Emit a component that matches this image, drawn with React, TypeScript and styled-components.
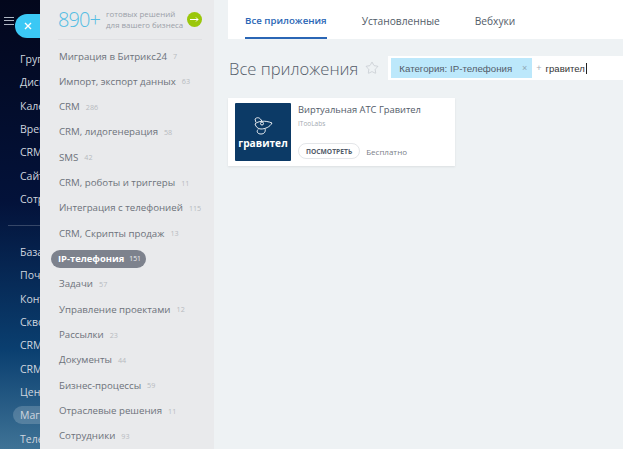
import { createGlobalStyle, styled } from 'styled-components';
import { Star } from 'lucide-react';

const GlobalStyle = createGlobalStyle`
  html, body {
    margin: 0;
    height: 100%;
    overflow: hidden;
  }
  #root {
    height: 100%;
  }
  * {
    box-sizing: border-box;
  }
`;

const Page = styled.div`
  width: 623px;
  height: 449px;
  display: flex;
  overflow: hidden;
  font-family: 'Open Sans', sans-serif;
  background: #eef2f4;
`;

const LeftMenu = styled.nav`
  position: relative;
  width: 40px;
  flex: none;
  padding-top: 50px;
  overflow: hidden;
  background: linear-gradient(180deg, #03071c 0%, #03123a 45%, #0a3f70 78%, #3f7396 100%);
`;

const Burger = styled.div`
  position: absolute;
  left: 4px;
  top: 17px;
  width: 10px;
  height: 8px;
  border-top: 1px solid #aeb6c2;
  border-bottom: 1px solid #aeb6c2;
  &::after {
    content: '';
    display: block;
    height: 1px;
    margin-top: 2px;
    background: #aeb6c2;
  }
`;

const CloseTab = styled.div`
  position: absolute;
  left: 15px;
  top: 14px;
  width: 40px;
  height: 24px;
  padding-left: 9px;
  display: flex;
  align-items: center;
  border-radius: 12px 0 0 12px;
  background: #3bc8f5;
  color: #fff;
`;

const MenuGroup = styled.div`
  display: flex;
  flex-direction: column;
  gap: 5.35px;
`;

const MenuItem = styled.div<{ $active?: boolean }>`
  height: 18px;
  margin-left: 13px;
  padding-left: 7px;
  width: 60px;
  white-space: nowrap;
  line-height: 18px;
  font-size: 10.5px;
  color: #cfd6df;
  border-radius: 9px;
  background: ${(p) => (p.$active ? 'rgba(255, 255, 255, 0.18)' : 'transparent')};
`;

const MenuDivider = styled.div`
  height: 1px;
  margin: 17px 0 17px 8px;
  background: rgba(255, 255, 255, 0.2);
`;

const Categories = styled.aside`
  position: relative;
  width: 174px;
  flex: none;
  padding: 0 12px 0 19px;
  overflow: hidden;
  background: #e9eaec;
`;

const Promo = styled.div`
  display: flex;
  align-items: center;
  height: 39px;
  margin-left: -1px;
`;

const PromoNumber = styled.div`
  font-size: 20px;
  font-weight: 300;
  color: #55bde3;
  letter-spacing: -0.9px;
  white-space: nowrap;
`;

const PromoText = styled.div`
  margin-left: 6px;
  font-size: 7.9px;
  line-height: 11px;
  color: #9aa0a8;
  white-space: nowrap;
`;

const PromoArrow = styled.div`
  flex: none;
  width: 15px;
  height: 15px;
  margin-left: auto;
  display: flex;
  align-items: center;
  justify-content: center;
  border-radius: 50%;
  background: #9bc70b;
`;

const CategoryDivider = styled.div`
  height: 1px;
  margin-left: -1px;
  margin-bottom: 7px;
  background: #dfe0e3;
`;

const CategoryList = styled.ul`
  margin: 0;
  padding: 0;
  list-style: none;
  display: flex;
  flex-direction: column;
  gap: 7.33px;
`;

const CategoryItem = styled.li<{ $active?: boolean }>`
  height: 18px;
  display: flex;
  align-items: center;
  gap: ${(p) => (p.$active ? '5px' : '6px')};
  width: fit-content;
  white-space: nowrap;
  font-size: ${(p) => (p.$active ? '9.4px' : '9.7px')};
  font-weight: ${(p) => (p.$active ? 700 : 400)};
  color: ${(p) => (p.$active ? '#fff' : '#6d727b')};
  ${(p) =>
    p.$active &&
    `
    margin-left: -8px;
    padding: 0 5px 0 7px;
    border-radius: 9px;
    background: #7d828d;
  `}
`;

const CategoryCount = styled.span<{ $active?: boolean }>`
  font-size: ${(p) => (p.$active ? '6.8px' : '7.2px')};
  font-weight: 400;
  color: ${(p) => (p.$active ? '#eceef0' : '#b7babf')};
`;

const Content = styled.main`
  flex: 1;
  min-width: 0;
`;

const Tabs = styled.div`
  height: 39px;
  margin-left: 14px;
  padding-left: 17px;
  display: flex;
  gap: 35px;
  background: #fff;
`;

const Tab = styled.div<{ $active?: boolean }>`
  height: 39px;
  padding-top: 14px;
  font-size: ${(p) => (p.$active ? '9.7px' : '10.2px')};
  line-height: 14px;
  font-weight: ${(p) => (p.$active ? 600 : 400)};
  color: ${(p) => (p.$active ? '#2a66b5' : '#535c69')};
  border-bottom: 2px solid ${(p) => (p.$active ? '#2a66b5' : 'transparent')};
`;

const TitleRow = styled.div`
  height: 24px;
  margin-top: 17px;
  margin-left: 15px;
  display: flex;
  align-items: center;
`;

const Title = styled.h1`
  margin: 0;
  font-size: 16.6px;
  font-weight: 300;
  color: #535c69;
  white-space: nowrap;
`;

const FavStar = styled(Star)`
  flex: none;
  margin-left: 7px;
  color: #b8bdc4;
`;

const FilterBox = styled.div`
  flex: 1;
  height: 24px;
  margin-left: 9px;
  padding-left: 3px;
  display: flex;
  align-items: center;
  background: #fff;
`;

const FilterTag = styled.div`
  height: 20px;
  width: 141px;
  padding: 0 5px 0 8px;
  display: flex;
  align-items: center;
  justify-content: space-between;
  font-family: 'Liberation Sans', sans-serif;
  font-size: 9.7px;
  color: #535c69;
  background: #bce8fb;
`;

const TagClose = styled.span`
  font-size: 9px;
  color: #8fa7b3;
`;

const FilterPlus = styled.span`
  margin-left: 4px;
  font-family: 'Liberation Sans', sans-serif;
  font-size: 9px;
  color: #a8adb4;
`;

const FilterInput = styled.span`
  margin-left: 4px;
  padding-right: 1px;
  font-family: 'Liberation Sans', sans-serif;
  font-size: 9.5px;
  color: #333;
  border-right: 1px solid #222;
`;

const AppCard = styled.article`
  width: 227px;
  height: 68px;
  margin: 18px 0 0 14px;
  padding: 5px 7px;
  display: flex;
  gap: 7px;
  background: #fff;
  box-shadow: 0 1px 2px rgba(0, 0, 0, 0.08);
`;

const AppLogo = styled.div`
  width: 56px;
  height: 58px;
  flex: none;
  padding-top: 13px;
  display: flex;
  flex-direction: column;
  align-items: center;
  border-radius: 1px;
  color: #fff;
  background: #0c3a66;
`;

const LogoWord = styled.span`
  font-size: 10.2px;
  line-height: 15px;
  font-weight: 700;
`;

const AppInfo = styled.div`
  flex: 1;
  min-width: 0;
  padding-top: 1px;
  display: flex;
  flex-direction: column;
`;

const AppName = styled.div`
  font-size: 9.35px;
  line-height: 12px;
  color: #535c69;
  white-space: nowrap;
`;

const AppVendor = styled.div`
  margin-top: 3px;
  font-size: 6.5px;
  line-height: 9px;
  color: #a4a9b0;
`;

const AppActions = styled.div`
  margin-top: auto;
  margin-bottom: 2px;
  display: flex;
  align-items: center;
  gap: 6px;
`;

const ViewButton = styled.div`
  height: 16px;
  padding: 0 7px;
  display: flex;
  align-items: center;
  border: 1px solid #e4e6e9;
  border-radius: 8px;
  font-size: 6.7px;
  font-weight: 700;
  color: #535c69;
`;

const Price = styled.span`
  font-size: 8px;
  color: #7a8089;
`;

const menuTop = ['Груп', 'Диск', 'Кале', 'Врем', 'CRM', 'Сайт', 'Сотр'];
const menuBottom = ['База', 'Почт', 'Конт', 'Скво', 'CRM', 'CRM', 'Цент', 'Маг', 'Теле'];

const categories: { name: string; count: number; active?: boolean }[] = [
  { name: 'Миграция в Битрикс24', count: 7 },
  { name: 'Импорт, экспорт данных', count: 63 },
  { name: 'CRM', count: 286 },
  { name: 'CRM, лидогенерация', count: 58 },
  { name: 'SMS', count: 42 },
  { name: 'CRM, роботы и триггеры', count: 11 },
  { name: 'Интеграция с телефонией', count: 115 },
  { name: 'CRM, Скрипты продаж', count: 13 },
  { name: 'IP-телефония', count: 151, active: true },
  { name: 'Задачи', count: 57 },
  { name: 'Управление проектами', count: 12 },
  { name: 'Рассылки', count: 23 },
  { name: 'Документы', count: 44 },
  { name: 'Бизнес-процессы', count: 59 },
  { name: 'Отраслевые решения', count: 11 },
  { name: 'Сотрудники', count: 93 },
];

const App = () => {
  return (
    <Page>
      <GlobalStyle />
      <LeftMenu>
        <Burger />
        <CloseTab>
          <svg width="8" height="8" viewBox="0 0 8 8" fill="none" stroke="currentColor" strokeWidth="1.4">
            <path d="M1 1l6 6M7 1L1 7" />
          </svg>
        </CloseTab>
        <MenuGroup>
          {menuTop.map((item) => (
            <MenuItem key={item}>{item}</MenuItem>
          ))}
        </MenuGroup>
        <MenuDivider />
        <MenuGroup>
          {menuBottom.map((item, i) => (
            <MenuItem key={i} $active={item === 'Маг'}>
              {item}
            </MenuItem>
          ))}
        </MenuGroup>
      </LeftMenu>
      <Categories>
        <Promo>
          <PromoNumber>890+</PromoNumber>
          <PromoText>
            готовых решений
            <br />
            для вашего бизнеса
          </PromoText>
          <PromoArrow>
            <svg width="9" height="7" viewBox="0 0 9 7" fill="none" stroke="#fff" strokeWidth="1">
              <path d="M0 3.5h8M6 1.5l2 2-2 2" />
            </svg>
          </PromoArrow>
        </Promo>
        <CategoryDivider />
        <CategoryList>
          {categories.map((c) => (
            <CategoryItem key={c.name} $active={c.active}>
              {c.name}
              <CategoryCount $active={c.active}>{c.count}</CategoryCount>
            </CategoryItem>
          ))}
        </CategoryList>
      </Categories>
      <Content>
        <Tabs>
          <Tab $active>Все приложения</Tab>
          <Tab>Установленные</Tab>
          <Tab>Вебхуки</Tab>
        </Tabs>
        <TitleRow>
          <Title>Все приложения</Title>
          <FavStar size={14} strokeWidth={1} />
          <FilterBox>
            <FilterTag>
              Категория: IP-телефония
              <TagClose>×</TagClose>
            </FilterTag>
            <FilterPlus>+</FilterPlus>
            <FilterInput>гравител</FilterInput>
          </FilterBox>
        </TitleRow>
        <AppCard>
          <AppLogo>
            <svg width="20" height="20" viewBox="0 0 20 20" fill="none" stroke="#fff" strokeWidth="0.9">
              <path d="M2 8C5 5 12 4 19 7C17 11 12 13 8 13C5 13 3 11 2 8Z" />
              <path d="M3 6.500L2 3C4 1 7 1 9 5.500" />
              <path d="M5 13.500C3 16 5 18 8 18C11 18 13 16 12 12.500" />
              <circle cx="9" cy="7.500" r="1.500" />
            </svg>
            <LogoWord>гравител</LogoWord>
          </AppLogo>
          <AppInfo>
            <AppName>Виртуальная АТС Гравител</AppName>
            <AppVendor>ITooLabs</AppVendor>
            <AppActions>
              <ViewButton>ПОСМОТРЕТЬ</ViewButton>
              <Price>Бесплатно</Price>
            </AppActions>
          </AppInfo>
        </AppCard>
      </Content>
    </Page>
  );
};

export default App;
